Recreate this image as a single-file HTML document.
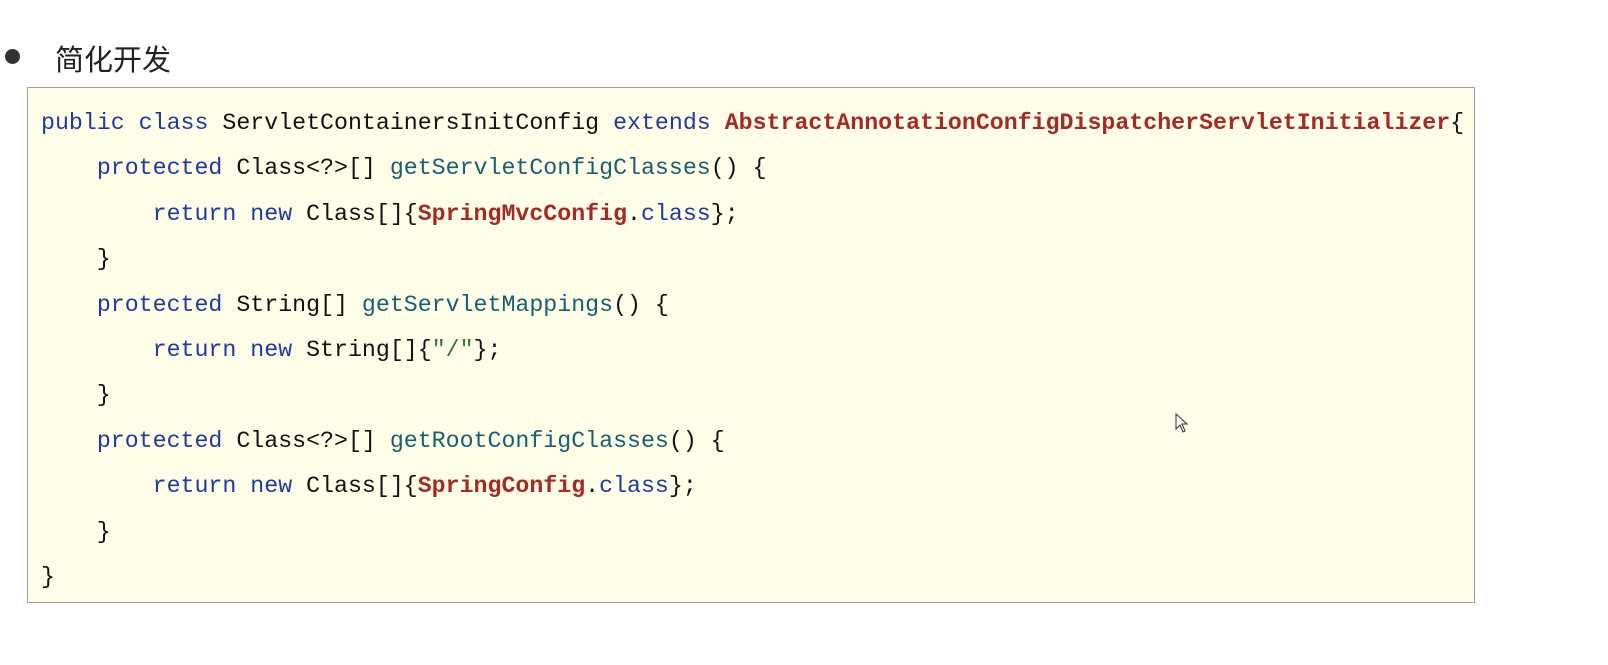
<!DOCTYPE html>
<html><head><meta charset="utf-8"><style>
body{margin:0;width:1608px;height:665px;background:#fff;position:relative;overflow:hidden}
.b{position:absolute;left:5px;top:49px;width:15px;height:15px;border-radius:50%;background:#333}
.h{position:absolute;left:55px;top:37px;font:29px "Liberation Sans","Noto Sans CJK SC",sans-serif;color:#222}
.box{position:absolute;left:27px;top:87px;width:1448px;height:516px;background:#fefee8;border:1px solid #a0a0a0;box-sizing:border-box}
pre{margin:0;position:absolute;left:13px;top:13px;font:23.25px "Liberation Mono",monospace;line-height:45.4px;color:#111}
.k{color:#1f3a9e}.m{color:#17606e}.r{color:#a32a26;font-weight:bold}.s{color:#2a7a2a}
</style></head><body>
<div class="b"></div><div class="h">简化开发</div>
<div class="box"><pre><span class="k">public class</span> ServletContainersInitConfig <span class="k">extends</span> <span class="r">AbstractAnnotationConfigDispatcherServletInitializer</span>{
    <span class="k">protected</span> Class&lt;?&gt;[] <span class="m">getServletConfigClasses</span>() {
        <span class="k">return new</span> Class[]{<span class="r">SpringMvcConfig</span>.<span class="k">class</span>};
    }
    <span class="k">protected</span> String[] <span class="m">getServletMappings</span>() {
        <span class="k">return new</span> String[]{<span class="s">"/"</span>};
    }
    <span class="k">protected</span> Class&lt;?&gt;[] <span class="m">getRootConfigClasses</span>() {
        <span class="k">return new</span> Class[]{<span class="r">SpringConfig</span>.<span class="k">class</span>};
    }
}</pre></div>
<svg style="position:absolute;left:1175px;top:413px" width="14" height="20"><path d="M1 1 L1 16 L5 12 L8 19 L10 18 L7 11 L12 11 Z" fill="#fff" stroke="#333" stroke-width="1"/></svg>
</body></html>
